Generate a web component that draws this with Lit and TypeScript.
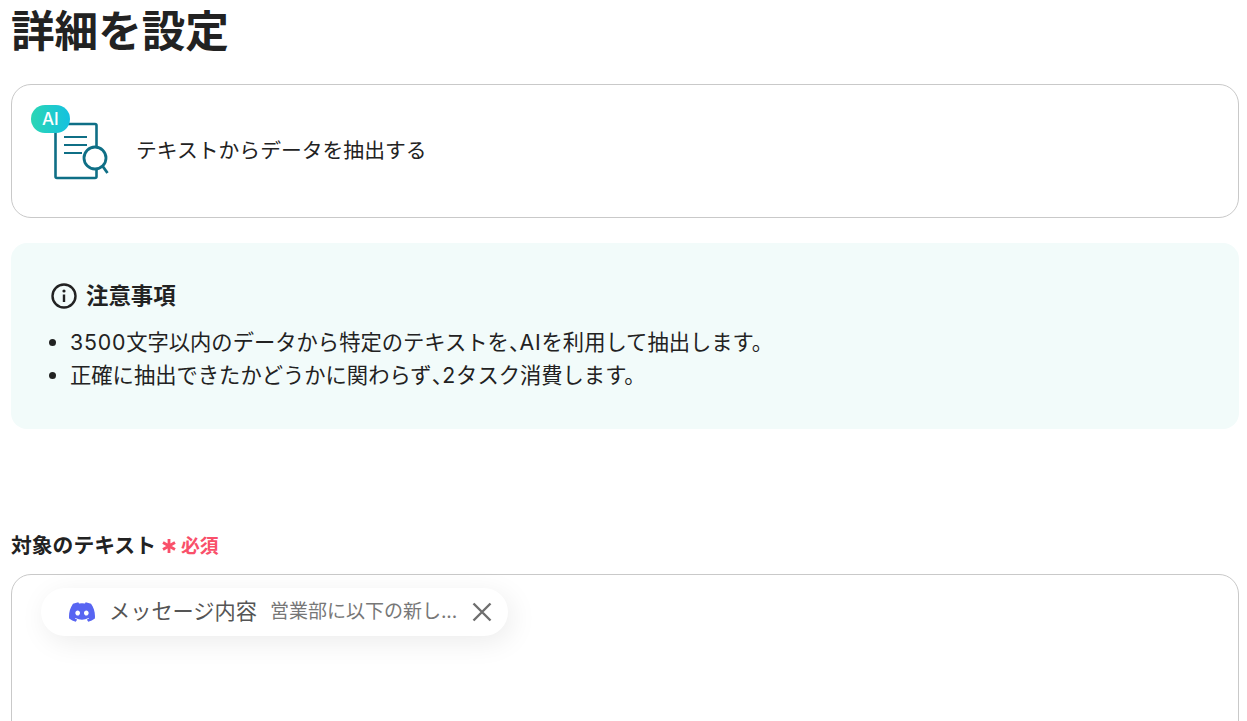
import { LitElement, html, css } from "lit";
import { customElement } from "lit/decorators.js";

@customElement("app-root")
export class AppRoot extends LitElement {
  static styles = css`
    :host {
      display: block;
      height: 721px;
      overflow: hidden;
      background: #fff;
      color: #222;
      font-family: Inter, "Noto Sans CJK JP", sans-serif;
    }
    .page { padding: 0 8px 0 11px; }
    h1 {
      margin: 0;
      height: 84px;
      font-size: 43.6px;
      font-weight: 700;
      line-height: 64px;
    }
    .card {
      box-sizing: border-box;
      height: 134px;
      border: 1px solid #c9c9c9;
      border-radius: 20px;
      display: flex;
      align-items: center;
      gap: 26px;
      padding-left: 19px;
    }
    .card-text { font-size: 20.8px; line-height: 28px; }
    .ai { position: relative; width: 79px; height: 76px; flex: none; align-self: flex-start; margin-top: 20px; }
    .ai svg { display: block; }
    .ai-label { position: absolute; left: 11px; top: 4px; color: #fff; font-size: 17px; line-height: 20px; font-weight: 500; }
    .notice {
      box-sizing: border-box;
      margin-top: 25px;
      height: 186px;
      background: #f2fbfa;
      border-radius: 16px;
      padding: 37px 39px;
    }
    .notice-head { display: flex; align-items: center; gap: 9px; font-size: 22.4px; font-weight: 700; height: 32px; padding-left: 1px; }
    .notice-head span { line-height: 28px; }
    ul { margin: 14px 0 0; padding: 0 0 0 20px; font-size: 21.3px; line-height: 33px; }
    .punc { font-feature-settings: "halt"; }
    .num { letter-spacing: 0.8px; }
    .label { margin-top: 97px; display: flex; align-items: center; height: 36px; font-size: 20.8px; font-weight: 700; }
    .star { margin-left: 6px; margin-top: 3px; width: 14px; height: 14px; flex: none; }
    .req { color: #f9506a; font-size: 18.8px; margin-left: 5px; font-weight: 700; }
    .field {
      position: relative;
      box-sizing: border-box;
      margin-top: 12px;
      height: 200px;
      border: 1px solid #c9c9c9;
      border-radius: 20px;
    }
    .pill {
      position: absolute;
      left: 29px;
      top: 13px;
      box-sizing: border-box;
      width: 467px;
      height: 48px;
      border-radius: 24px;
      background: #fff;
      box-shadow: 4px 6px 28px rgba(0, 0, 0, 0.08);
      display: flex;
      align-items: center;
      padding-left: 28px;
      white-space: nowrap;
    }
    .p-name { font-size: 21.2px; line-height: 28px; color: #555; margin-left: 14px; margin-bottom: 3px; }
    .p-val { font-size: 19px; line-height: 28px; color: #777; margin-left: 13px; margin-bottom: 1px; }
    .p-x { margin-left: 15px; margin-bottom: 1px; display: block; }
  `;

  render() {
    return html`
      <div class="page">
        <h1>詳細を設定</h1>
        <div class="card">
          <div class="ai">
            <svg width="79" height="76" viewBox="0 0 79 76">
              <defs>
                <linearGradient id="g" x1="0" x2="1" y1="0" y2="0">
                  <stop offset="0" stop-color="#2bd6b4" />
                  <stop offset="1" stop-color="#14c1e0" />
                </linearGradient>
              </defs>
              <path d="M24.500 19H64a1.500 1.500 0 0 1 1.500 1.500V42M65.500 64V71.500a1.500 1.500 0 0 1-1.500 1.500H26a1.500 1.500 0 0 1-1.500-1.500V19" fill="none" stroke="#0f6f86" stroke-width="2.600" />
              <path d="M33 32H56M33 40H56M33 48H51" stroke="#0f6f86" stroke-width="2.200" fill="none" />
              <circle cx="64" cy="53" r="11" fill="#fff" stroke="#0f6f86" stroke-width="2.800" />
              <path d="M71.500 61L76.500 68" stroke="#0f6f86" stroke-width="2.800" fill="none" />
              <rect x="0" y="0" width="39" height="28" rx="14" fill="url(#g)" />
            </svg>
            <span class="ai-label">AI</span>
          </div>
          <div class="card-text">テキストからデータを抽出する</div>
        </div>
        <div class="notice">
          <div class="notice-head">
            <svg width="26" height="26" viewBox="0 0 26 26">
              <circle cx="13" cy="13" r="11.500" fill="none" stroke="#222" stroke-width="2.400" />
              <circle cx="13" cy="8" r="1.600" fill="#222" />
              <path d="M13 11.500V19" stroke="#222" stroke-width="2.400" />
            </svg>
            <span>注意事項</span>
          </div>
          <ul>
            <li><span class="num">3500</span>文字以内のデータから特定のテキストを<span class="punc">、</span><span class="num">AI</span>を利用して抽出します。</li>
            <li>正確に抽出できたかどうかに関わらず<span class="punc">、</span><span class="num">2</span>タスク消費します。</li>
          </ul>
        </div>
        <div class="label">
          対象のテキスト
          <svg class="star" viewBox="0 0 14 14">
            <path d="M7 0V14M1 3.500L13 10.500M13 3.500L1 10.500" stroke="#f9506a" stroke-width="2.800" fill="none" />
          </svg>
          <span class="req">必須</span>
        </div>
        <div class="field">
          <div class="pill">
            <svg width="26" height="20" viewBox="0 0 127.140 96.360">
              <path fill="#5865f2" d="M107.700 8.070A105.150 105.150 0 0 0 81.470 0a72.060 72.060 0 0 0-3.360 6.830 97.680 97.680 0 0 0-29.110 0A72.370 72.370 0 0 0 45.640 0a105.890 105.890 0 0 0-26.250 8.090C2.790 32.650-1.710 56.600.540 80.210a105.730 105.730 0 0 0 32.170 16.150 77.700 77.700 0 0 0 6.890-11.110 68.420 68.420 0 0 1-10.850-5.180c.91-.66 1.800-1.340 2.660-2a75.570 75.570 0 0 0 64.320 0c.87.710 1.760 1.390 2.660 2a68.680 68.680 0 0 1-10.870 5.190 77 77 0 0 0 6.890 11.100 105.250 105.250 0 0 0 32.190-16.140c2.640-27.380-4.510-51.110-18.900-72.150ZM42.450 65.690C36.180 65.690 31 60 31 53s5-12.740 11.430-12.740S54 46 53.890 53 48.840 65.690 42.450 65.690Zm42.240 0C78.410 65.690 73.250 60 73.250 53s5-12.740 11.440-12.740S96.230 46 96.120 53 91.080 65.690 84.690 65.690Z" />
            </svg>
            <span class="p-name">メッセージ内容</span>
            <span class="p-val">営業部に以下の新し...</span>
            <svg class="p-x" width="20" height="20" viewBox="0 0 20 20">
              <path d="M1.500 1.500L18.500 18.500M18.500 1.500L1.500 18.500" stroke="#6e6e6e" stroke-width="2.400" fill="none" />
            </svg>
          </div>
        </div>
      </div>
    `;
  }
}
